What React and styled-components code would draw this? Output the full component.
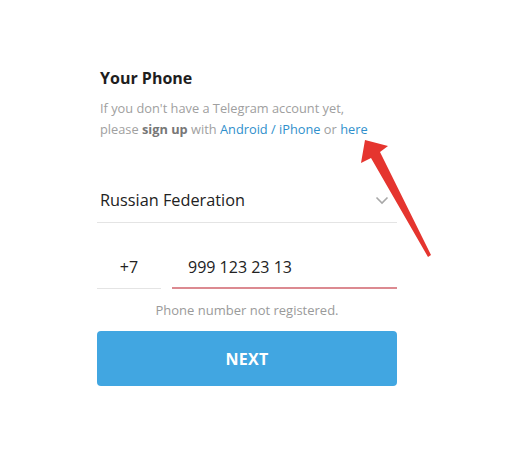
import React from "react";
import styled, { createGlobalStyle } from "styled-components";

const GlobalStyle = createGlobalStyle`
  html, body {
    margin: 0;
    padding: 0;
    background: #ffffff;
    font-family: "Open Sans", "Noto Sans", sans-serif;
  }
`;

const Page = styled.div`
  position: relative;
  width: 508px;
  height: 458px;
  overflow: hidden;
  padding: 68px 0 0 97px;
  box-sizing: border-box;
`;

const Form = styled.div`
  width: 300px;
  display: flex;
  flex-direction: column;
`;

const Title = styled.h3`
  margin: 0 0 0 3px;
  font-size: 16px;
  line-height: 20px;
  font-weight: 700;
  color: #1e1e1e;
`;

const Description = styled.p`
  margin: 10px 0 0 3px;
  font-size: 12.8px;
  line-height: 21px;
  color: #a0a0a0;

  b {
    color: #777;
    font-weight: 700;
  }
`;

const Link = styled.a`
  color: #2f8fcc;
  text-decoration: none;
`;

const CountryRow = styled.div`
  margin-top: 48px;
  display: flex;
  align-items: center;
  justify-content: space-between;
  padding: 0 8px 10px 3px;
  border-bottom: 1px solid #e4e4e4;
  font-size: 16.3px;
  line-height: 24px;
  color: #222;
`;

const PhoneRow = styled.div`
  margin-top: 32px;
  display: flex;
  gap: 11px;
  align-items: flex-end;
`;

const Field = styled.div`
  width: ${(p) => p.$width};
  flex: ${(p) => (p.$grow ? 1 : "none")};
  box-sizing: border-box;
  padding: 0 0 ${(p) => (p.$error ? 8 : 9)}px ${(p) => p.$indent || 0}px;
  text-align: ${(p) => (p.$center ? "center" : "left")};
  font-size: 16px;
  line-height: 24px;
  color: #222;
  border-bottom: ${(p) => (p.$error ? "2px solid #dc8a91" : "1px solid #e4e4e4")};
`;

const ErrorText = styled.div`
  margin-top: 12px;
  text-align: center;
  font-size: 13px;
  line-height: 18px;
  color: #9a9a9a;
`;

const NextButton = styled.button`
  margin-top: 12px;
  height: 55px;
  border: none;
  border-radius: 4px;
  background: #41a6e1;
  color: #fff;
  font-family: inherit;
  font-size: 16px;
  font-weight: 700;
  letter-spacing: 0.3px;
`;

const Arrow = styled.svg`
  position: absolute;
  left: 0;
  top: 0;
  pointer-events: none;
`;

const Chevron = () => (
  <svg width="14" height="9" viewBox="0 0 14 9">
    <path d="M1.5 1.5 L7 7 L12.5 1.5" fill="none" stroke="#a8a8a8" strokeWidth="1.6" />
  </svg>
);

export default function App() {
  return (
    <>
      <GlobalStyle />
      <Page>
        <Form>
          <Title>Your Phone</Title>
          <Description>
            If you don't have a Telegram account yet,
            <br />
            please <b>sign up</b> with <Link>Android / iPhone</Link> or{" "}
            <Link>here</Link>
          </Description>
          <CountryRow>
            Russian Federation
            <Chevron />
          </CountryRow>
          <PhoneRow>
            <Field $width="64px" $center>
              +7
            </Field>
            <Field $grow $indent={16} $error>
              999 123 23 13
            </Field>
          </PhoneRow>
          <ErrorText>Phone number not registered.</ErrorText>
          <NextButton>NEXT</NextButton>
        </Form>
        <Arrow width="508" height="458" viewBox="0 0 508 458">
          <polygon
            points="365,140 388,146 380,152 431,255 428,257 371,158 361,163"
            fill="#e5352f"
          />
        </Arrow>
      </Page>
    </>
  );
}
